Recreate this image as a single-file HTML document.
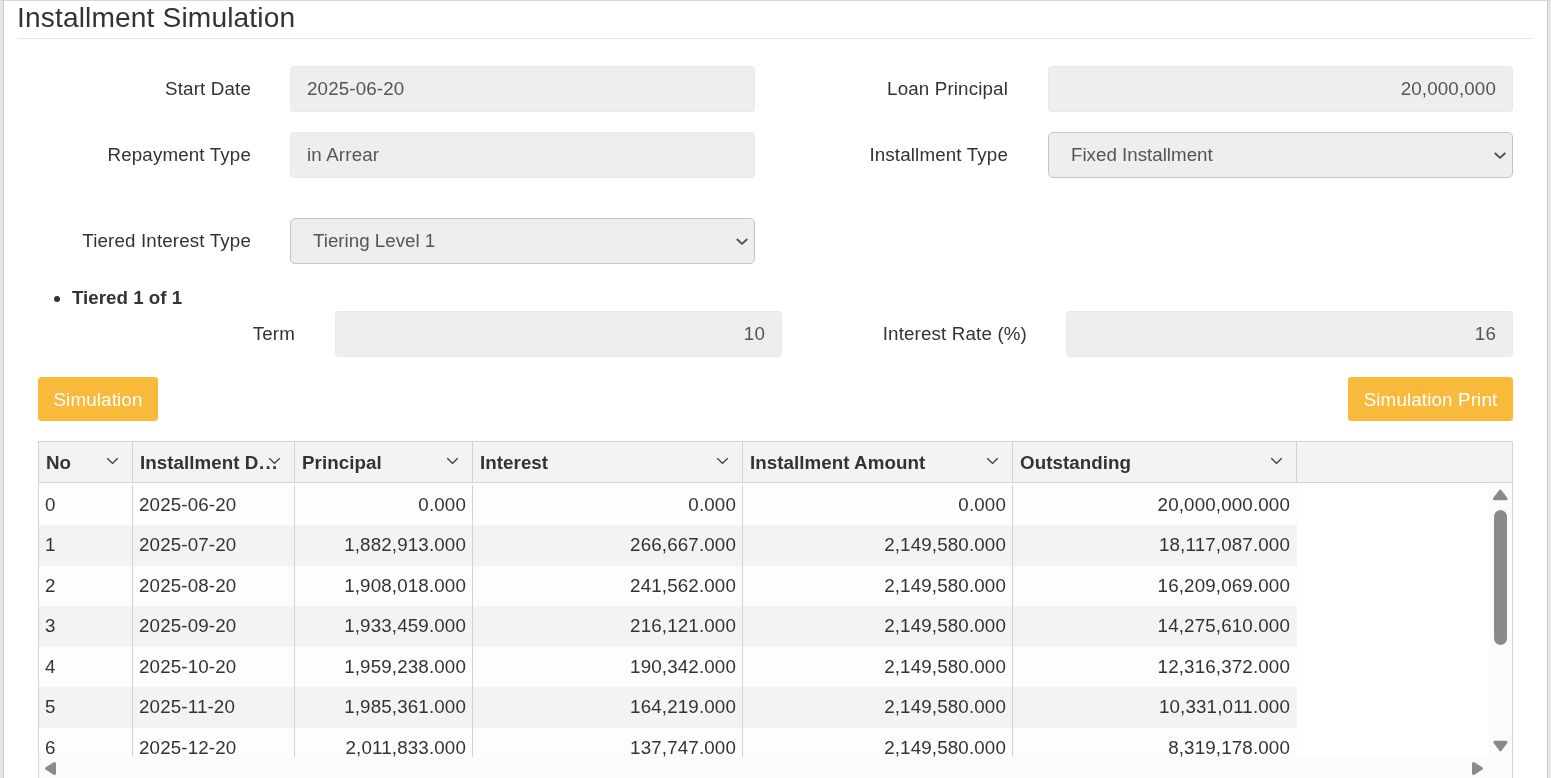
<!DOCTYPE html>
<html><head><meta charset="utf-8">
<style>
html,body{margin:0;padding:0;}
body{width:1551px;height:778px;overflow:hidden;position:relative;will-change:transform;background:#fff;font-family:"Liberation Sans",sans-serif;font-size:18.75px;color:#333;letter-spacing:0.15px;}
.a{position:absolute;}
.lbl{position:absolute;white-space:nowrap;text-align:right;line-height:46px;height:46px;color:#333;}
.inp{position:absolute;box-sizing:border-box;height:46px;background:#eee;border:1px solid #e8e8e8;border-radius:3.5px;color:#555;line-height:44px;padding:0 16px;white-space:nowrap;}
.sel{position:absolute;box-sizing:border-box;letter-spacing:0;height:46px;background:#eee;border:1px solid #c4c4c4;border-radius:5px;color:#555;line-height:44px;padding:0 22px;white-space:nowrap;}
.chev{position:absolute;}
.btn{position:absolute;box-sizing:border-box;height:44px;padding-top:1px;background:#f9b93b;border-radius:3.5px;color:#fff;line-height:43px;text-align:center;white-space:nowrap;}
.hd{position:absolute;top:443px;letter-spacing:0.05px;height:40px;line-height:40px;font-weight:bold;color:#333;white-space:nowrap;overflow:hidden;}
.vd{position:absolute;width:1px;background:#d4d4d4;}
.row{position:absolute;left:39px;width:1257px;height:40.5px;}
.c{position:absolute;line-height:40px;white-space:nowrap;color:#333;}
.r{text-align:right;}
</style></head>
<body>
<!-- frame -->
<div class="a" style="left:0;top:0;width:3px;height:778px;background:#e6e6e6"></div>
<div class="a" style="left:3px;top:0;width:1px;height:778px;background:#cbcbcb"></div>
<div class="a" style="left:1548px;top:0;width:3px;height:778px;background:#e6e6e6"></div>
<div class="a" style="left:1547px;top:0;width:1px;height:778px;background:#cbcbcb"></div>
<div class="a" style="left:0;top:0;width:1551px;height:1px;background:#d6dadd"></div>

<div class="a" style="left:17px;top:2px;font-size:28.125px;line-height:32px;color:#333;white-space:nowrap">Installment Simulation</div>
<div class="a" style="left:18px;top:38px;width:1515px;height:1px;background:#e5e5e5"></div>

<!-- row 1 -->
<div class="lbl" style="left:38px;width:213px;top:66px">Start Date</div>
<div class="inp" style="left:290px;top:66px;width:465px">2025-06-20</div>
<div class="lbl" style="left:775px;width:233px;top:66px">Loan Principal</div>
<div class="inp" style="left:1048px;top:66px;width:465px;text-align:right">20,000,000</div>

<!-- row 2 -->
<div class="lbl" style="left:38px;width:213px;top:132px">Repayment Type</div>
<div class="inp" style="left:290px;top:132px;width:465px">in Arrear</div>
<div class="lbl" style="left:775px;width:233px;top:132px">Installment Type</div>
<div class="sel" style="left:1048px;top:132px;width:465px">Fixed Installment</div>
<svg class="chev" style="left:1492px;top:150px" width="16" height="11" viewBox="0 0 16 11"><path d="M2.8 3.0 L8.05 7.8 L13.3 3.0" fill="none" stroke="#4a4a4a" stroke-width="1.8"/></svg>

<!-- row 3 -->
<div class="lbl" style="left:38px;width:213px;top:218px">Tiered Interest Type</div>
<div class="sel" style="left:290px;top:218px;width:465px">Tiering Level 1</div>
<svg class="chev" style="left:734px;top:236px" width="16" height="11" viewBox="0 0 16 11"><path d="M2.8 3.0 L8.05 7.8 L13.3 3.0" fill="none" stroke="#4a4a4a" stroke-width="1.8"/></svg>

<!-- tier -->
<div class="a" style="left:54px;top:296px;width:6px;height:6px;border-radius:50%;background:#333"></div>
<div class="a" style="left:72px;top:286px;line-height:24px;font-weight:bold;white-space:nowrap;letter-spacing:0">Tiered 1 of 1</div>

<div class="lbl" style="left:38px;width:257px;top:311px">Term</div>
<div class="inp" style="left:335px;top:311px;width:447px;text-align:right">10</div>
<div class="lbl" style="left:800px;width:227px;top:311px">Interest Rate (%)</div>
<div class="inp" style="left:1066px;top:311px;width:447px;text-align:right">16</div>

<!-- buttons -->
<div class="btn" style="left:38px;top:377px;width:120px">Simulation</div>
<div class="btn" style="left:1348px;top:377px;width:165px">Simulation Print</div>

<!-- table -->
<div class="a" style="left:38px;top:441px;width:1475px;height:337px;box-sizing:border-box;border:1px solid #d4d4d4;border-bottom:0;background:#fff"></div>
<div class="a" style="left:39px;top:442px;width:1473px;height:40px;background:#f3f3f3"></div>
<div class="a" style="left:39px;top:482px;width:1473px;height:1px;background:#d4d4d4"></div>
<div class="a" style="left:39px;top:483px;width:1258px;height:41.5px;background:#fdfdfd"></div>
<div class="a" style="left:39px;top:525.0px;width:1258px;height:40.5px;background:#f3f3f3"></div>
<div class="a" style="left:39px;top:565.5px;width:1258px;height:40.5px;background:#fdfdfd"></div>
<div class="a" style="left:39px;top:606.0px;width:1258px;height:40.5px;background:#f3f3f3"></div>
<div class="a" style="left:39px;top:646.5px;width:1258px;height:40.5px;background:#fdfdfd"></div>
<div class="a" style="left:39px;top:687.0px;width:1258px;height:40.5px;background:#f3f3f3"></div>
<div class="a" style="left:39px;top:727.5px;width:1258px;height:40.5px;background:#fdfdfd"></div>
<div class="vd" style="left:132px;top:442px;height:40px"></div>
<div class="vd" style="left:132px;top:485px;height:272px"></div>
<div class="vd" style="left:294px;top:442px;height:40px"></div>
<div class="vd" style="left:294px;top:485px;height:272px"></div>
<div class="vd" style="left:472px;top:442px;height:40px"></div>
<div class="vd" style="left:472px;top:485px;height:272px"></div>
<div class="vd" style="left:742px;top:442px;height:40px"></div>
<div class="vd" style="left:742px;top:485px;height:272px"></div>
<div class="vd" style="left:1012px;top:442px;height:40px"></div>
<div class="vd" style="left:1012px;top:485px;height:272px"></div>
<div class="vd" style="left:1296px;top:442px;height:40px"></div>
<div class="hd" style="left:46px;">No</div>
<svg class="a" style="left:106.0px;top:457px" width="13" height="8" viewBox="0 0 13 8"><path d="M1.3 1.2 L6.5 6.4 L11.7 1.2" fill="none" stroke="#333" stroke-width="1.25"/></svg>
<div class="hd" style="left:140px;">Installment D<span style="letter-spacing:1.3px;margin-left:0.6px">...</span></div>
<svg class="a" style="left:268.0px;top:457px" width="13" height="8" viewBox="0 0 13 8"><path d="M1.3 1.2 L6.5 6.4 L11.7 1.2" fill="none" stroke="#333" stroke-width="1.25"/></svg>
<div class="hd" style="left:302px;">Principal</div>
<svg class="a" style="left:446.0px;top:457px" width="13" height="8" viewBox="0 0 13 8"><path d="M1.3 1.2 L6.5 6.4 L11.7 1.2" fill="none" stroke="#333" stroke-width="1.25"/></svg>
<div class="hd" style="left:480px;">Interest</div>
<svg class="a" style="left:716.0px;top:457px" width="13" height="8" viewBox="0 0 13 8"><path d="M1.3 1.2 L6.5 6.4 L11.7 1.2" fill="none" stroke="#333" stroke-width="1.25"/></svg>
<div class="hd" style="left:750px;">Installment Amount</div>
<svg class="a" style="left:986.0px;top:457px" width="13" height="8" viewBox="0 0 13 8"><path d="M1.3 1.2 L6.5 6.4 L11.7 1.2" fill="none" stroke="#333" stroke-width="1.25"/></svg>
<div class="hd" style="left:1020px;">Outstanding</div>
<svg class="a" style="left:1270.0px;top:457px" width="13" height="8" viewBox="0 0 13 8"><path d="M1.3 1.2 L6.5 6.4 L11.7 1.2" fill="none" stroke="#333" stroke-width="1.25"/></svg>
<div class="c" style="left:45px;top:484.5px">0</div>
<div class="c" style="left:139px;top:484.5px">2025-06-20</div>
<div class="c" style="right:1085px;top:484.5px">0.000</div>
<div class="c" style="right:815px;top:484.5px">0.000</div>
<div class="c" style="right:545px;top:484.5px">0.000</div>
<div class="c" style="right:261px;top:484.5px">20,000,000.000</div>
<div class="c" style="left:45px;top:525.0px">1</div>
<div class="c" style="left:139px;top:525.0px">2025-07-20</div>
<div class="c" style="right:1085px;top:525.0px">1,882,913.000</div>
<div class="c" style="right:815px;top:525.0px">266,667.000</div>
<div class="c" style="right:545px;top:525.0px">2,149,580.000</div>
<div class="c" style="right:261px;top:525.0px">18,117,087.000</div>
<div class="c" style="left:45px;top:565.5px">2</div>
<div class="c" style="left:139px;top:565.5px">2025-08-20</div>
<div class="c" style="right:1085px;top:565.5px">1,908,018.000</div>
<div class="c" style="right:815px;top:565.5px">241,562.000</div>
<div class="c" style="right:545px;top:565.5px">2,149,580.000</div>
<div class="c" style="right:261px;top:565.5px">16,209,069.000</div>
<div class="c" style="left:45px;top:606.0px">3</div>
<div class="c" style="left:139px;top:606.0px">2025-09-20</div>
<div class="c" style="right:1085px;top:606.0px">1,933,459.000</div>
<div class="c" style="right:815px;top:606.0px">216,121.000</div>
<div class="c" style="right:545px;top:606.0px">2,149,580.000</div>
<div class="c" style="right:261px;top:606.0px">14,275,610.000</div>
<div class="c" style="left:45px;top:646.5px">4</div>
<div class="c" style="left:139px;top:646.5px">2025-10-20</div>
<div class="c" style="right:1085px;top:646.5px">1,959,238.000</div>
<div class="c" style="right:815px;top:646.5px">190,342.000</div>
<div class="c" style="right:545px;top:646.5px">2,149,580.000</div>
<div class="c" style="right:261px;top:646.5px">12,316,372.000</div>
<div class="c" style="left:45px;top:687.0px">5</div>
<div class="c" style="left:139px;top:687.0px">2025-11-20</div>
<div class="c" style="right:1085px;top:687.0px">1,985,361.000</div>
<div class="c" style="right:815px;top:687.0px">164,219.000</div>
<div class="c" style="right:545px;top:687.0px">2,149,580.000</div>
<div class="c" style="right:261px;top:687.0px">10,331,011.000</div>
<div class="c" style="left:45px;top:727.5px">6</div>
<div class="c" style="left:139px;top:727.5px">2025-12-20</div>
<div class="c" style="right:1085px;top:727.5px">2,011,833.000</div>
<div class="c" style="right:815px;top:727.5px">137,747.000</div>
<div class="c" style="right:545px;top:727.5px">2,149,580.000</div>
<div class="c" style="right:261px;top:727.5px">8,319,178.000</div>
<div class="a" style="left:1489px;top:483px;width:23px;height:295px;background:#fbfbfb"></div>
<div class="a" style="left:39px;top:757px;width:1473px;height:21px;background:#fbfbfb"></div>
<svg class="a" style="left:1492px;top:488px" width="17" height="14" viewBox="0 0 17 14"><path d="M8.3 3.2 L14.1 10.7 L2.5 10.7 Z" fill="#8a8a8a" stroke="#8a8a8a" stroke-width="3" stroke-linejoin="round"/></svg>
<div class="a" style="left:1494px;top:510px;width:13px;height:135px;border-radius:6.5px;background:#8a8a8a"></div>
<svg class="a" style="left:1492px;top:739px" width="17" height="14" viewBox="0 0 17 14"><path d="M2.8 3.2 L14.1 3.2 L8.45 10.7 Z" fill="#8a8a8a" stroke="#8a8a8a" stroke-width="3" stroke-linejoin="round"/></svg>
<svg class="a" style="left:43px;top:760px" width="15" height="17" viewBox="0 0 15 17"><path d="M11.5 3.5 L3.5 8.5 L11.5 13.5 Z" fill="#8a8a8a" stroke="#8a8a8a" stroke-width="3" stroke-linejoin="round"/></svg>
<svg class="a" style="left:1470px;top:760px" width="15" height="17" viewBox="0 0 15 17"><path d="M3.5 3.5 L11.5 8.5 L3.5 13.5 Z" fill="#8a8a8a" stroke="#8a8a8a" stroke-width="3" stroke-linejoin="round"/></svg>
</body></html>
